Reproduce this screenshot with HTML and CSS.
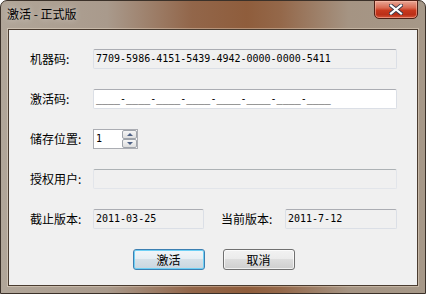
FILE: index.html
```html
<!DOCTYPE html>
<html lang="zh-CN">
<head>
    <meta charset="UTF-8">
    <title>激活 - 正式版</title>
    <link rel="stylesheet" href="styles.css">
</head>
<body>
    <div class="window">
        <div class="titlebar">
            <span class="title">激活 - 正式版</span>
            <div class="close">
                <svg width="14" height="11" viewBox="0 0 14 11">
                    <path d="M2 1.5 L12 9.5 M12 1.5 L2 9.5" stroke="#3a3a4a" stroke-width="4" stroke-linecap="square"/>
                    <path d="M2 1.5 L12 9.5 M12 1.5 L2 9.5" stroke="#ffffff" stroke-width="2.2" stroke-linecap="square"/>
                </svg>
            </div>
        </div>
        <div class="frame">
            <div class="client">
                <div class="row">
                    <span class="label">机器码:</span>
                    <div class="field readonly full">7709-5986-4151-5439-4942-0000-0000-5411</div>
                </div>
                <div class="row">
                    <span class="label">激活码:</span>
                    <div class="field edit full">____-____-____-____-____-____-____-____</div>
                </div>
                <div class="row">
                    <span class="label">储存位置:</span>
                    <div class="spin">
                        <span class="spin-value">1</span>
                        <div class="spin-buttons">
                            <div class="spin-btn"><span class="arrow up"></span></div>
                            <div class="spin-btn"><span class="arrow down"></span></div>
                        </div>
                    </div>
                </div>
                <div class="row">
                    <span class="label">授权用户:</span>
                    <div class="field disabled full"></div>
                </div>
                <div class="row">
                    <span class="label">截止版本:</span>
                    <div class="field readonly date-left">2011-03-25</div>
                    <span class="label second">当前版本:</span>
                    <div class="field readonly date-right">2011-7-12</div>
                </div>
                <div class="buttons">
                    <button class="btn default">激活</button>
                    <button class="btn">取消</button>
                </div>
            </div>
        </div>
    </div>
</body>
</html>
```

FILE: styles.css
```css
body {
    margin: 0;
    padding: 0;
    background-color: #ffffff;
    font-family: "Noto Sans CJK SC", "Noto Sans", sans-serif;
    font-size: 12px;
    color: #000;
}
.window {
    width: 426px;
    height: 294px;
    box-sizing: border-box;
    border: 1px solid #3b3129;
    border-radius: 7px 7px 0 0;
    background: linear-gradient(90deg, #b1a699 0%, #a99a8c 25%, #92664a 45%, #8f5d3c 58%, #94684a 66%, #a59483 82%, #a69888 100%);
    display: flex;
    flex-direction: column;
}
.titlebar {
    height: 28px;
    display: flex;
    align-items: flex-start;
    justify-content: space-between;
    padding: 0 7px 0 6px;
}
.title {
    margin-top: 5px;
    line-height: 16px;
    text-shadow: 0 0 6px rgba(255, 255, 255, 0.55);
}
.close {
    width: 44px;
    height: 19px;
    margin-top: -1px;
    box-sizing: border-box;
    border: 1px solid #4e2016;
    border-radius: 0 0 5px 5px;
    background: linear-gradient(180deg, #e9a796 0%, #d96a52 40%, #c8391e 55%, #bb2f17 80%, #d4553a 100%);
    box-shadow: inset 0 0 0 1px rgba(255, 200, 180, 0.5);
    display: flex;
    align-items: center;
    justify-content: center;
}
.frame {
    flex: 1;
    padding: 0 7px 7px 7px;
    display: flex;
}
.client {
    flex: 1;
    background-color: #f0f0f0;
    border: 1px solid #4a3c30;
    box-shadow: 0 0 0 1px rgba(255, 240, 220, 0.35);
    padding: 19px 20px 0 21px;
}
.row {
    display: flex;
    align-items: center;
    height: 20px;
    margin-bottom: 20px;
}
.label {
    width: 63px;
    flex-shrink: 0;
    line-height: 20px;
}
.label.second {
    width: 64px;
    margin-left: 17px;
}
.field {
    height: 20px;
    box-sizing: border-box;
    border: 1px solid #dbdfe6;
    border-top-color: #abadb3;
    border-radius: 2px;
    padding: 0 0 0 2px;
    font-family: "DejaVu Sans Mono", "Liberation Mono", monospace;
    font-size: 10px;
    line-height: 18px;
    white-space: nowrap;
    overflow: hidden;
}
.field.full {
    width: 304px;
}
.field.readonly {
    background-color: #f0f0f0;
}
.field.edit {
    background-color: #ffffff;
}
.field.disabled {
    background-color: #f0f0f0;
    border-color: #e2e5ea;
    border-top-color: #adb2b5;
}
.field.date-left {
    width: 111px;
}
.field.date-right {
    width: 112px;
}
.spin {
    width: 45px;
    height: 20px;
    box-sizing: border-box;
    border: 1px solid #abadb3;
    background-color: #ffffff;
    display: flex;
    justify-content: space-between;
}
.spin-value {
    font-family: "DejaVu Sans Mono", "Liberation Mono", monospace;
    font-size: 10px;
    line-height: 18px;
    padding-left: 2px;
}
.spin-buttons {
    width: 15px;
    display: flex;
    flex-direction: column;
}
.spin-btn {
    flex: 1;
    box-sizing: border-box;
    border: 1px solid #9fa4ab;
    border-radius: 2px;
    background: linear-gradient(180deg, #f6f6f6, #dedede);
    display: flex;
    align-items: center;
    justify-content: center;
}
.arrow {
    width: 0;
    height: 0;
    border-left: 3px solid transparent;
    border-right: 3px solid transparent;
}
.arrow.up {
    border-bottom: 3px solid #4d6185;
}
.arrow.down {
    border-top: 3px solid #4d6185;
}
.buttons {
    display: flex;
    justify-content: center;
    gap: 18px;
    margin-top: 3px;
}
.btn {
    width: 72px;
    height: 21px;
    padding: 0;
    font-family: "Noto Sans CJK SC", "Noto Sans", sans-serif;
    font-size: 12px;
    color: #000;
    border: 1px solid #707070;
    border-radius: 3px;
    background: linear-gradient(180deg, #f2f2f2 0%, #ebebeb 49%, #dddddd 50%, #cfcfcf 100%);
    box-shadow: inset 0 0 0 1px rgba(255, 255, 255, 0.7);
}
.btn.default {
    border-color: #3c7fb1;
    background: linear-gradient(180deg, #f1f6f9 0%, #e6eef3 49%, #d6e1e8 50%, #c9d6df 100%);
    box-shadow: inset 0 0 0 1px #6fd0f5;
}
```
